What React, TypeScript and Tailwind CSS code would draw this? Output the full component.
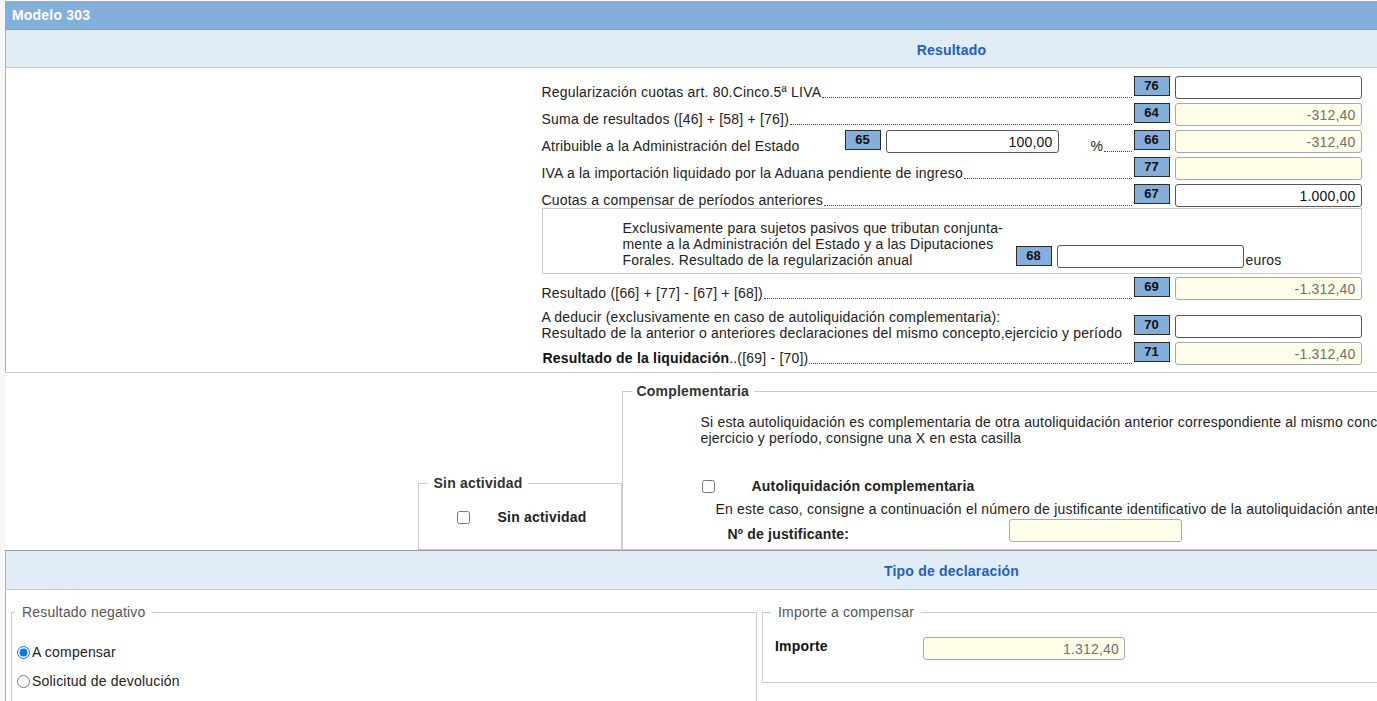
import React from 'react';

type FieldProps = { value?: string; ro?: boolean; className?: string };

function Field({ value = '', ro = false, className = 'w-[187px]' }: FieldProps) {
    return (
        <input
            readOnly
            defaultValue={value}
            className={`${className} h-[23px] shrink-0 rounded-[3px] border pr-[5px] text-right text-[14px] outline-none ${
                ro ? 'bg-[#fefee9] border-[#a9a9a9] text-[#707070]' : 'bg-white border-[#555] text-[#111]'
            }`}
        />
    );
}

function Num({ n, className = '' }: { n: string; className?: string }) {
    return (
        <div
            className={`w-[36px] h-[20px] shrink-0 border border-[#2a2a2a] bg-[#84afdb] pt-[2px] text-center text-[13px] font-bold leading-[13px] tracking-normal text-[#111] ${className}`}
        >
            {n}
        </div>
    );
}

function Dots() {
    return <span className="mb-px ml-px flex-1 border-b border-dotted border-[#444]" />;
}

function Cell({ n, value, ro }: { n: string; value?: string; ro?: boolean }) {
    return (
        <div className="ml-[2px] flex items-start gap-[5px]">
            <Num n={n} />
            <Field value={value} ro={ro} />
        </div>
    );
}

function Row({ children, n, value, ro }: { children: React.ReactNode; n: string; value?: string; ro?: boolean }) {
    return (
        <div className="flex h-[23px]">
            <div className="flex min-w-0 flex-1 items-end">
                {children}
                <Dots />
            </div>
            <Cell n={n} value={value} ro={ro} />
        </div>
    );
}

function Label({ children }: { children: React.ReactNode }) {
    return <span className="whitespace-nowrap leading-[14px]">{children}</span>;
}

export default function App() {
    return (
        <div className="h-[701px] w-[1377px] overflow-hidden bg-[#f7f7f7] font-['Liberation_Sans',Arial,sans-serif] text-[14px] tracking-[0.2px] text-[#222]">
            <div className="ml-[5px] w-[1892px] bg-white">
                <div className="mt-px flex h-[28px] items-center bg-[#83afdb] pl-[7px] pt-px text-[14px] font-bold text-white">
                    Modelo 303
                </div>

                {/* Resultado */}
                <div className="border-l border-t border-b border-l-[#b0b0b0] border-t-[#999] border-b-[#ccc]">
                    <div className="flex h-[38px] items-center justify-center border-b border-[#c8c8c8] bg-[#e0ecf6] pt-[3px] text-[14px] font-bold text-[#1d5ec9]">
                        Resultado
                    </div>
                    <div className="mx-auto w-[820px] pt-[8px] pb-[7px]">
                        <div className="flex flex-col gap-[4px]">
                            <Row n="76">
                                <Label>Regularización cuotas art. 80.Cinco.5ª LIVA</Label>
                            </Row>
                            <Row n="64" value="-312,40" ro>
                                <Label>Suma de resultados ([46] + [58] + [76])</Label>
                            </Row>
                            <Row n="66" value="-312,40" ro>
                                <span className="w-[303px] shrink-0 whitespace-nowrap leading-[14px]">
                                    Atribuible a la Administración del Estado
                                </span>
                                <div className="flex items-start gap-[5px] self-start">
                                    <Num n="65" />
                                    <Field value="100,00" className="w-[173px]" />
                                </div>
                                <span className="ml-[32px] leading-[14px]">%</span>
                            </Row>
                            <Row n="77" ro>
                                <Label>IVA a la importación liquidado por la Aduana pendiente de ingreso</Label>
                            </Row>
                            <Row n="67" value="1.000,00">
                                <Label>Cuotas a compensar de períodos anteriores</Label>
                            </Row>
                        </div>

                        <div className="mt-px flex h-[66px] items-end border border-[#ccc] pb-[5px]">
                            <div className="ml-[80px] w-[393px] shrink-0 whitespace-nowrap leading-4">
                                Exclusivamente para sujetos pasivos que tributan conjunta-
                                <br />
                                mente a la Administración del Estado y a las Diputaciones
                                <br />
                                Forales. Resultado de la regularización anual
                            </div>
                            <div className="flex items-start gap-[5px]">
                                <Num n="68" className="mt-px" />
                                <Field />
                            </div>
                            <span className="ml-[2px] leading-4">euros</span>
                        </div>

                        <div className="mt-[3px]">
                            <Row n="69" value="-1.312,40" ro>
                                <Label>Resultado ([66] + [77] - [67] + [68])</Label>
                            </Row>
                        </div>

                        <div className="mt-[9px] flex items-end">
                            <div className="flex-1 whitespace-nowrap leading-4">
                                A deducir (exclusivamente en caso de autoliquidación complementaria):
                                <br />
                                Resultado de la anterior o anteriores declaraciones del mismo concepto,ejercicio y período
                            </div>
                            <div className="mb-[3px]">
                                <Cell n="70" />
                            </div>
                        </div>

                        <div className="mt-px">
                            <Row n="71" value="-1.312,40" ro>
                                <span className="ml-px whitespace-nowrap leading-[14px]">
                                    <b className="font-bold text-[#111]">Resultado de la liquidación</b>..([69] - [70])
                                </span>
                            </Row>
                        </div>
                    </div>
                </div>

                {/* Sin actividad / Complementaria */}
                <div className="flex h-[177px] items-end justify-center">
                    <fieldset className="w-[204px] border border-[#ccc] pb-[24px]">
                        <legend className="ml-[9px] px-[6px] font-bold leading-4 text-[#333]">Sin actividad</legend>
                        <div className="mt-[18px] flex h-4 items-center pl-[38px]">
                            <input type="checkbox" />
                            <span className="ml-[28px] font-bold text-[#222]">Sin actividad</span>
                        </div>
                    </fieldset>
                    <fieldset className="w-[863px] border border-[#ccc] pb-[7px]">
                        <legend className="ml-[9px] px-[5px] font-bold leading-4 text-[#333]">Complementaria</legend>
                        <div className="mt-[15px] whitespace-nowrap pl-[78px] leading-4">
                            Si esta autoliquidación es complementaria de otra autoliquidación anterior correspondiente al mismo concepto,
                            <br />
                            ejercicio y período, consigne una X en esta casilla
                        </div>
                        <div className="mt-[32px] flex h-4 items-center pl-[79px]">
                            <input type="checkbox" />
                            <span className="ml-[37px] font-bold text-[#222]">Autoliquidación complementaria</span>
                        </div>
                        <div className="mt-[7px] whitespace-nowrap pl-[93px] leading-4">
                            En este caso, consigne a continuación el número de justificante identificativo de la autoliquidación anterior
                        </div>
                        <div className="mt-[2px] flex items-end pl-[105px]">
                            <span className="w-[281px] font-bold leading-4 text-[#222]">Nº de justificante:</span>
                            <Field ro className="w-[173px]" />
                        </div>
                    </fieldset>
                </div>

                {/* Tipo de declaración */}
                <div className="border-l border-t border-l-[#b0b0b0] border-t-[#999]">
                    <div className="flex h-[39px] items-center justify-center border-b border-[#c8c8c8] bg-[#e0ecf6] pt-[2px] text-[14px] font-bold text-[#1d5ec9]">
                        Tipo de declaración
                    </div>
                    <div className="flex items-start gap-[5px] pl-[5px] pt-[14px]">
                        <fieldset className="w-[746px] border border-[#ccc] pb-[20px]">
                            <legend className="ml-[3px] px-[7px] leading-4 text-[#555]">Resultado negativo</legend>
                            <label className="mt-[24px] flex h-4 items-center pl-[5px]">
                                <input type="radio" name="neg" defaultChecked />
                                <span className="ml-[2px]">A compensar</span>
                            </label>
                            <label className="mt-[13px] flex h-4 items-center pl-[5px]">
                                <input type="radio" name="neg" />
                                <span className="ml-[2px]">Solicitud de devolución</span>
                            </label>
                        </fieldset>
                        <fieldset className="w-[1120px] border border-[#ccc] pb-[22px]">
                            <legend className="ml-[8px] px-[7px] leading-4 text-[#555]">Importe a compensar</legend>
                            <div className="mt-[17px] flex items-start pl-[12px]">
                                <span className="w-[148px] pt-px font-bold leading-4 text-[#111]">Importe</span>
                                <Field value="1.312,40" ro className="w-[202px]" />
                            </div>
                        </fieldset>
                    </div>
                </div>
            </div>
        </div>
    );
}
